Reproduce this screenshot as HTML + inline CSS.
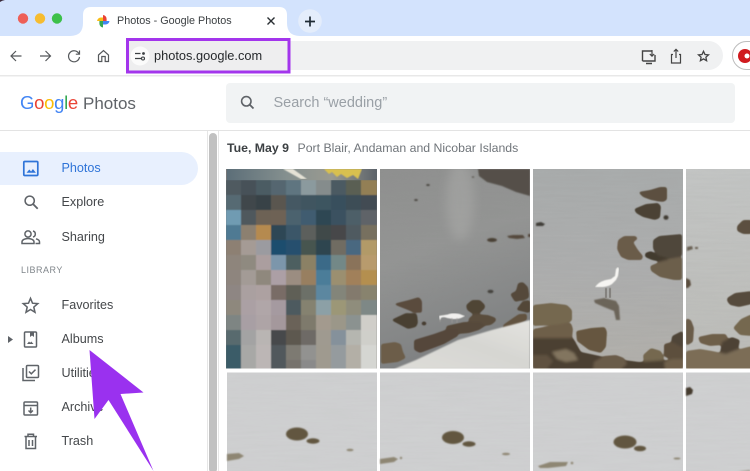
<!DOCTYPE html>
<html><head><meta charset="utf-8"><style>
html,body{margin:0;padding:0;background:#fff;width:750px;height:471px;overflow:hidden}
#r{position:relative;width:750px;height:471px;overflow:hidden;font-family:"Liberation Sans",sans-serif}
.t{position:absolute;white-space:nowrap;line-height:1}
.n{font-size:12.600px;color:#44474a;left:61.500px}
svg{position:absolute;left:0;top:0}
</style></head><body><div id="r">
<svg width="750" height="471" viewBox="0 0 750 471">
<defs>
<filter id="b" x="-5%" y="-5%" width="110%" height="110%"><feGaussianBlur stdDeviation="0.7"/></filter>
<filter id="bb" x="-30%" y="-30%" width="160%" height="160%"><feGaussianBlur stdDeviation="5"/></filter>
<filter id="rk" x="-5%" y="-5%" width="110%" height="110%"><feGaussianBlur stdDeviation="1.300"/><feColorMatrix values="1 0 0 0 0 0 1 0 0 0 0 0 1 0 0 0 0 0 7 -3"/><feGaussianBlur stdDeviation="0.500"/></filter>
<filter id="m" x="0" y="0" width="100%" height="100%"><feGaussianBlur stdDeviation="0.5"/></filter>
<filter id="w" x="0" y="0" width="100%" height="100%"><feTurbulence type="fractalNoise" baseFrequency="0.025 0.4" numOctaves="2" seed="4"/><feColorMatrix values="0 0 0 0 0.25 0 0 0 0 0.25 0 0 0 0 0.25 0 0 0 0.5 -0.12"/></filter>
<linearGradient id="g2" x1="0" y1="0" x2="0.25" y2="1"><stop offset="0" stop-color="#8f908f"/><stop offset=".45" stop-color="#949594"/><stop offset="1" stop-color="#7e8081"/></linearGradient>
<linearGradient id="g3" x1="0" y1="0" x2="0" y2="1"><stop offset="0" stop-color="#a9acac"/><stop offset=".5" stop-color="#adaeae"/><stop offset="1" stop-color="#b2b0ab"/></linearGradient>
<linearGradient id="g4" x1="0" y1="0" x2="0" y2="1"><stop offset="0" stop-color="#c3c5c4"/><stop offset="1" stop-color="#bcbcb8"/></linearGradient>
<linearGradient id="wd" x1="0" y1="1" x2="1" y2="0"><stop offset="0" stop-color="#dddcd8"/><stop offset=".55" stop-color="#d6d6d2"/><stop offset="1" stop-color="#e4e3df"/></linearGradient>
<linearGradient id="st" x1="0" y1="0" x2="1" y2="0"><stop offset="0" stop-color="#5c6e78"/><stop offset=".4" stop-color="#85908f"/><stop offset=".7" stop-color="#9a9a90"/><stop offset="1" stop-color="#5c636a"/></linearGradient>
<clipPath id="c1"><rect x="226" y="169" width="151" height="199.500"/></clipPath>
<clipPath id="c2"><rect x="380" y="169" width="150" height="199.500"/></clipPath>
<clipPath id="c3"><rect x="533" y="169" width="150" height="199.500"/></clipPath>
<clipPath id="c4"><rect x="686" y="169" width="64" height="199.500"/></clipPath>
</defs>

<!-- browser chrome -->
<rect width="750" height="36" fill="#d3e3fd"/>
<rect y="36" width="750" height="39" fill="#fff"/>
<rect y="75" width="750" height="1.500" fill="#e8e8e8"/>
<path d="M0 0h5q-3 .5-5 2z" fill="#3a2a3a"/>
<path d="M0 36h70q13 0 13-13V15q0-8 8-8h188q8 0 8 8v8q0 13 13 13h0v5H0z" fill="#fff"/>
<circle cx="23" cy="18.500" r="5.200" fill="#ee5f57"/><circle cx="40" cy="18.500" r="5.200" fill="#f6bc2f"/><circle cx="57" cy="18.500" r="5.200" fill="#3cc04a"/>
<!-- favicon -->
<path d="M97 21a4 4 0 0 1 4-3.500h2V21z" fill="#f9bc15"/>
<path d="M103 15a4 4 0 0 1 3.600 4V21H103z" fill="#ea4335"/>
<path d="M109.500 21a4 4 0 0 1-4 3.500H103V21z" fill="#4285f4"/>
<path d="M103 27.500a4 4 0 0 1-3.600-4V21H103z" fill="#34a853"/>
<path d="M267.500 17.500l7 7m0-7l-7 7" stroke="#2a2f33" stroke-width="1.400" fill="none"/>
<circle cx="310" cy="21" r="11.800" fill="#e4edfb"/>
<path d="M305 21.500h10M310 16.500v10" stroke="#1f2a33" stroke-width="1.700"/>

<!-- address bar -->
<rect x="127" y="41" width="596" height="29" rx="14.500" fill="#f0f1f2"/>
<rect x="127.500" y="39.500" width="161.500" height="32.500" fill="#eeeeef" stroke="#a335ec" stroke-width="3"/>
<circle cx="140" cy="56" r="9.500" fill="#fbfbfb"/>
<path d="M135 53.500h5.500M141.500 58.500h-6.500" stroke="#3c4043" stroke-width="1.300"/>
<circle cx="143.500" cy="53.500" r="1.400" fill="#3c4043"/>
<circle cx="143" cy="58.500" r="1.500" fill="none" stroke="#3c4043" stroke-width="1.100"/>
<g fill="none" stroke="#55585b" stroke-width="1.200">
<path d="M21.500 56H11.500M16 51l-5 5 5 5"/>
<path d="M40 56h10M45.500 51l5 5-5 5"/>
<path d="M78.800 53.500a5.500 5.500 0 1 0 .7 3.500M79.500 50.500v3.700h-3.700"/>
<path d="M98.500 55l5-4.500 5 4.500v6.500h-3.300V56.500h-3.400v5H98.500z"/>
<path d="M642.500 61V51h9M655 55v6h-12.500M646 63.500h6" stroke-width="1.400" stroke="#444"/>
<path d="M652 50v6M649.800 54l2.200 2.200 2.200-2.200" stroke-width="1.200" stroke="#444"/>
<path d="M673 54.500h-1.500V63h9v-8.500H679M676 58V49.500M673.800 51.500l2.200-2.200 2.200 2.200" stroke-width="1.200" stroke="#444"/>
<path d="M703.500 51.300l1.500 3.200 3.500.4-2.600 2.300.7 3.500-3.100-1.800-3.100 1.800.7-3.500-2.600-2.300 3.500-.4z" stroke-width="1.300" stroke="#444"/>
</g>
<rect x="732.500" y="41.500" width="40" height="28" rx="14" fill="#fff" stroke="#bdbdbd"/>
<circle cx="745" cy="56" r="7" fill="#d01a1e"/><circle cx="747" cy="56" r="2.500" fill="#fff"/>

<!-- app header -->
<rect x="226" y="83" width="509" height="40" rx="4" fill="#f1f3f4"/>
<path d="M253.500 108.500l-4.200-4.200" stroke="#5f6368" stroke-width="1.800"/>
<circle cx="246.300" cy="101.300" r="4.700" fill="none" stroke="#5f6368" stroke-width="1.600"/>
<rect y="130" width="750" height="1" fill="#e3e3e3"/>

<!-- sidebar -->
<path d="M0 152H181.500a16.500 16.500 0 0 1 0 33H0z" fill="#e8f0fe"/>
<rect x="207" y="131" width="1" height="340" fill="#e6e6e6"/>
<rect x="218" y="131" width="1" height="340" fill="#e6e6e6"/>
<rect x="209" y="133" width="8" height="340" rx="4" fill="#c1c1c1"/>
<!-- Photos icon -->
<rect x="23.800" y="161.500" width="14" height="14" rx="1" fill="none" stroke="#2f74d8" stroke-width="1.700"/>
<path d="M26.500 172.800l2.800-3.300 1.800 2 1.800-2.500 3 3.800z" fill="#2f74d8"/>
<g fill="none" stroke="#5f6368" stroke-width="1.500">
<circle cx="29.700" cy="200.700" r="4.600"/><path d="M33 204l4.700 4.700" stroke-width="1.800"/>
<circle cx="28" cy="234" r="3.100"/><path d="M22 243.500v-1.700c0-2.200 3.500-3.300 6-3.300s6 1.100 6 3.300v1.700z"/>
<path d="M33 231a3.100 3.100 0 0 1 0 6M36 238.800c2 .6 3.500 1.500 3.500 3v1.700h-4" />
<path d="M30.500 298.300l2 4.900 5.300.4-4 3.500 1.200 5.200-4.500-2.800-4.500 2.800 1.200-5.200-4-3.500 5.300-.4z"/>
<rect x="24.500" y="332" width="12" height="15" rx="1"/>
<path d="M23 368v12.500h12"/><rect x="26.500" y="365.500" width="12" height="12" rx="1"/>
<path d="M29 371.500l2.300 2.300 4.200-4.200"/>
<rect x="24" y="402" width="13.500" height="13" rx="1"/><path d="M24 405.500h13.500M30.700 407.500v5M28.500 410.500l2.200 2.200 2.200-2.200"/>
<path d="M24.500 436.500h12.500M28 436v-1.800h5.500V436M26 437v11.500h9.500V437M29 440v6M32.500 440v6"/>
</g>
<path d="M30 332h4v5l-2-1.500-2 1.500z" fill="#5f6368"/>
<path d="M27 344l2-2.500 1.200 1.300 1-1.300 2.300 2.500z" fill="#5f6368"/>
<path d="M8 336l5 3.500-5 3.500z" fill="#5f6368"/>

<!-- photo 1 mosaic -->
<g clip-path="url(#c1)">
<rect x="226" y="169" width="151" height="200" fill="#777"/>
<rect x="227" y="169" width="150" height="12" fill="url(#st)"/>
<g filter="url(#m)">
<path d="M283 169l18 10h6l-14-10z" fill="#e5e2d6"/>
<path d="M324 169l5 5 3-2 5 5 4-3 6 4 6-3 5 4 4-10z" fill="#d8c050"/>
</g>
<g filter="url(#m)">
<rect x="226" y="180" width="15" height="15" fill="#4f5a60"/><rect x="241" y="180" width="15" height="15" fill="#465158"/><rect x="256" y="180" width="15" height="15" fill="#4b5c64"/><rect x="271" y="180" width="15" height="15" fill="#54666f"/><rect x="286" y="180" width="15" height="15" fill="#5f7580"/><rect x="301" y="180" width="15" height="15" fill="#8b9a9e"/><rect x="316" y="180" width="15" height="15" fill="#858c8c"/><rect x="331" y="180" width="15" height="15" fill="#4c5a62"/><rect x="346" y="180" width="15" height="15" fill="#5a5f53"/><rect x="361" y="180" width="16" height="15" fill="#937f55"/>
<rect x="226" y="195" width="15" height="15" fill="#566a73"/><rect x="241" y="195" width="15" height="15" fill="#40474b"/><rect x="256" y="195" width="15" height="15" fill="#394247"/><rect x="271" y="195" width="15" height="15" fill="#5a564f"/><rect x="286" y="195" width="15" height="15" fill="#445864"/><rect x="301" y="195" width="15" height="15" fill="#3f5460"/><rect x="316" y="195" width="15" height="15" fill="#3e5561"/><rect x="331" y="195" width="15" height="15" fill="#38505d"/><rect x="346" y="195" width="15" height="15" fill="#3e4e57"/><rect x="361" y="195" width="16" height="15" fill="#434c52"/>
<rect x="226" y="210" width="15" height="15" fill="#6f9bb2"/><rect x="241" y="210" width="15" height="15" fill="#4f595d"/><rect x="256" y="210" width="15" height="15" fill="#6d6255"/><rect x="271" y="210" width="15" height="15" fill="#6e6254"/><rect x="286" y="210" width="15" height="15" fill="#4c626e"/><rect x="301" y="210" width="15" height="15" fill="#3f5c70"/><rect x="316" y="210" width="15" height="15" fill="#2f4753"/><rect x="331" y="210" width="15" height="15" fill="#3b5161"/><rect x="346" y="210" width="15" height="15" fill="#4d5e68"/><rect x="361" y="210" width="16" height="15" fill="#5e6468"/>
<rect x="226" y="225" width="15" height="15" fill="#4f7a93"/><rect x="241" y="225" width="15" height="15" fill="#8c806f"/><rect x="256" y="225" width="15" height="15" fill="#b58a50"/><rect x="271" y="225" width="15" height="15" fill="#2f4654"/><rect x="286" y="225" width="15" height="15" fill="#3a5668"/><rect x="301" y="225" width="15" height="15" fill="#5b5f5c"/><rect x="316" y="225" width="15" height="15" fill="#40494a"/><rect x="331" y="225" width="15" height="15" fill="#46474a"/><rect x="346" y="225" width="15" height="15" fill="#4f5a60"/><rect x="361" y="225" width="16" height="15" fill="#77705f"/>
<rect x="226" y="240" width="15" height="15" fill="#8d8073"/><rect x="241" y="240" width="15" height="15" fill="#a59b95"/><rect x="256" y="240" width="15" height="15" fill="#9b9ba0"/><rect x="271" y="240" width="15" height="15" fill="#1f4e6e"/><rect x="286" y="240" width="15" height="15" fill="#25506e"/><rect x="301" y="240" width="15" height="15" fill="#46554f"/><rect x="316" y="240" width="15" height="15" fill="#2d4550"/><rect x="331" y="240" width="15" height="15" fill="#6f6c62"/><rect x="346" y="240" width="15" height="15" fill="#4a6880"/><rect x="361" y="240" width="16" height="15" fill="#b29a67"/>
<rect x="226" y="255" width="15" height="15" fill="#8e857c"/><rect x="241" y="255" width="15" height="15" fill="#8f8a80"/><rect x="256" y="255" width="15" height="15" fill="#ab9e9f"/><rect x="271" y="255" width="15" height="15" fill="#7b96ab"/><rect x="286" y="255" width="15" height="15" fill="#4d5f60"/><rect x="301" y="255" width="15" height="15" fill="#8b8165"/><rect x="316" y="255" width="15" height="15" fill="#3a6b88"/><rect x="331" y="255" width="15" height="15" fill="#738887"/><rect x="346" y="255" width="15" height="15" fill="#8a735a"/><rect x="361" y="255" width="16" height="15" fill="#b89b6d"/>
<rect x="226" y="270" width="15" height="15" fill="#8e857e"/><rect x="241" y="270" width="15" height="15" fill="#a39b96"/><rect x="256" y="270" width="15" height="15" fill="#8f887d"/><rect x="271" y="270" width="15" height="15" fill="#ac9fa5"/><rect x="286" y="270" width="15" height="15" fill="#9b8d81"/><rect x="301" y="270" width="15" height="15" fill="#987f60"/><rect x="316" y="270" width="15" height="15" fill="#4b7d99"/><rect x="331" y="270" width="15" height="15" fill="#9b8f70"/><rect x="346" y="270" width="15" height="15" fill="#a1805a"/><rect x="361" y="270" width="16" height="15" fill="#b48f50"/>
<rect x="226" y="285" width="15" height="15" fill="#8e8683"/><rect x="241" y="285" width="15" height="15" fill="#aaa0a0"/><rect x="256" y="285" width="15" height="15" fill="#ada1a1"/><rect x="271" y="285" width="15" height="15" fill="#796c66"/><rect x="286" y="285" width="15" height="15" fill="#5e5e57"/><rect x="301" y="285" width="15" height="15" fill="#6c7068"/><rect x="316" y="285" width="15" height="15" fill="#5b87a0"/><rect x="331" y="285" width="15" height="15" fill="#83857a"/><rect x="346" y="285" width="15" height="15" fill="#837a6d"/><rect x="361" y="285" width="16" height="15" fill="#88836e"/>
<rect x="226" y="300" width="15" height="15" fill="#8e887d"/><rect x="241" y="300" width="15" height="15" fill="#aba0a4"/><rect x="256" y="300" width="15" height="15" fill="#b0a6a8"/><rect x="271" y="300" width="15" height="15" fill="#a59aa0"/><rect x="286" y="300" width="15" height="15" fill="#4e5a5f"/><rect x="301" y="300" width="15" height="15" fill="#85826f"/><rect x="316" y="300" width="15" height="15" fill="#8ca0a6"/><rect x="331" y="300" width="15" height="15" fill="#9c9777"/><rect x="346" y="300" width="15" height="15" fill="#8f8d7c"/><rect x="361" y="300" width="16" height="15" fill="#7e8886"/>
<rect x="226" y="315" width="15" height="15" fill="#7e8583"/><rect x="241" y="315" width="15" height="15" fill="#a89fa4"/><rect x="256" y="315" width="15" height="15" fill="#aea4a6"/><rect x="271" y="315" width="15" height="15" fill="#a4989c"/><rect x="286" y="315" width="15" height="15" fill="#6a6258"/><rect x="301" y="315" width="15" height="15" fill="#7e7a6c"/><rect x="316" y="315" width="15" height="15" fill="#a39a8e"/><rect x="331" y="315" width="15" height="15" fill="#9b9789"/><rect x="346" y="315" width="15" height="15" fill="#8b9290"/><rect x="361" y="315" width="16" height="15" fill="#d0cec9"/>
<rect x="226" y="330" width="15" height="15" fill="#586a6e"/><rect x="241" y="330" width="15" height="15" fill="#a3a3a3"/><rect x="256" y="330" width="15" height="15" fill="#b9b5b3"/><rect x="271" y="330" width="15" height="15" fill="#464a4c"/><rect x="286" y="330" width="15" height="15" fill="#5d5850"/><rect x="301" y="330" width="15" height="15" fill="#6e6a66"/><rect x="316" y="330" width="15" height="15" fill="#9f9a90"/><rect x="331" y="330" width="15" height="15" fill="#85919b"/><rect x="346" y="330" width="15" height="15" fill="#b5b6b0"/><rect x="361" y="330" width="16" height="15" fill="#cfcfca"/>
<rect x="226" y="345" width="15" height="24" fill="#3a5b68"/><rect x="241" y="345" width="15" height="24" fill="#a8a8a6"/><rect x="256" y="345" width="15" height="24" fill="#bcb6b5"/><rect x="271" y="345" width="15" height="24" fill="#51585c"/><rect x="286" y="345" width="15" height="15" fill="#7d7a72"/><rect x="301" y="345" width="15" height="15" fill="#929290"/><rect x="316" y="345" width="15" height="24" fill="#9f9a8f"/><rect x="331" y="345" width="15" height="24" fill="#959b9e"/><rect x="346" y="345" width="15" height="24" fill="#b3afa6"/><rect x="361" y="345" width="16" height="24" fill="#d5d6d2"/>
<rect x="286" y="360" width="15" height="9" fill="#77736d"/><rect x="301" y="360" width="15" height="9" fill="#8a8a8a"/>
</g>
</g>

<!-- photo 2 -->
<g clip-path="url(#c2)">
<rect x="380" y="169" width="150" height="200" fill="url(#g2)"/>
<rect x="380" y="169" width="150" height="200" filter="url(#w)" opacity=".3"/>
<ellipse cx="460" cy="200" rx="14" ry="40" fill="#b3b3b1" opacity=".4" filter="url(#bb)"/>
<path d="M478 169h52v27l-14-4-14-6-15-4-8-6z" fill="#55504a" filter="url(#b)"/>
<g filter="url(#b)">
<ellipse cx="428" cy="185" rx="1.800" ry="1" fill="#4a4640"/><ellipse cx="416" cy="200" rx="1.800" ry="1" fill="#4a4640"/><ellipse cx="473" cy="177" rx="1.300" ry=".8" fill="#5a5650"/>
<ellipse cx="492" cy="240" rx="5" ry="2" fill="#4a4034"/>
<path d="M507 236l6-1 10 0 2 3-8 1-8-1zM528 234l3 0v3l-3 0z" fill="#544a3c"/>
<ellipse cx="490.500" cy="291.500" rx="3" ry="1.700" fill="#44423e"/>
</g>
<g filter="url(#rk)">
<path d="M510 294l6-3 2-8 5-1 5 5 1 7 0 4-6 2-8 2z" fill="#54483a"/>
<path d="M393 304l16-4 10-3 3 4 0 12-9-1z" fill="#5a4c3c"/>
<path d="M391 320l15-7 11 1 1 9-2 4-8 2z" fill="#4a3f32"/>
<ellipse cx="424" cy="323.500" rx="2.800" ry="2.200" fill="#463c30"/>
<path d="M466 305l6-5 8 0 5 5 0 3-5 5-7 1-6-4z" fill="#4f4436"/>
<path d="M468 319l6-5 14 1 8 3 0 3-5 4-8 1-12-2z" fill="#5a4d3d"/>
<path d="M446 326l18-4 16 0 5 4-6 4-10 3-22 2z" fill="#574a3a"/>
<path d="M414 340l20-6 14-5 10 0 0 7-14 8-24 9-6-3z" fill="#54473a"/>
<path d="M381 344l14-2 6 2 2 8 3 6-8 4-17 2z" fill="#6c5d49"/>
<path d="M503 325l10-7 6-4 8 0 0 6-8 4-10 4-6 3z" fill="#62523f"/>
<path d="M516 310l6-8 8-2v13z" fill="#524637"/>
</g>
<path d="M394 369l22-9 42-20 34-10 38-10v49z" fill="url(#wd)" filter="url(#b)"/>
<g filter="url(#m)">
<path d="M439 316c4-1 8-1 10-2 3-1 10-1 13 1l3 1-4 2c-3 1-6 1-8 1l-6-1c-2-1-5-1-6 0l-1 3z" fill="#f1f0ee"/>
<path d="M440 322v-2.500M452 323v-5M457 323v-5" stroke="#9c9a96" stroke-width=".7"/>
</g>
</g>

<!-- photo 3 -->
<g clip-path="url(#c3)">
<rect x="533" y="169" width="150" height="200" fill="url(#g3)"/>
<rect x="533" y="169" width="150" height="200" filter="url(#w)" opacity=".28"/>
<g filter="url(#rk)">
<path d="M638 192l12-2 10-3 7 0 0 13-4 2-12-2-8-3z" fill="#5c5040"/>
<path d="M634 209l12-5 12-1 3 3-1 12-5 2-12-3-7-4z" fill="#4c4234"/>
<path d="M618 240l6-4 12 0 2 3-5 3 5 8 5 6-1 4-14 0-7-3-4-8z" fill="#6b5c49"/>
<path d="M653 240l6-4 23-2v22l-12 2-12-3-5-6z" fill="#50463a"/>
<path d="M645 253l6-2 8 5 10 3-7 3-10-2-7-3z" fill="#433a2e"/>
<path d="M650 266l12-5 20-4v23l-8 0-14-3-9-6z" fill="#6c5e4c"/>
<path d="M533 305l18-2 16 2 5 5 0 11-12 3-27 2z" fill="#75674f"/>
<path d="M533 329l18-3 20-3 2 6-1 9-39 2z" fill="#6e5f4a"/>
<path d="M576 331l15-3 14-1 2 5-1 15-5 6-12-3-12-9z" fill="#66573f"/>
<path d="M672 336l10-5 1 0v23l-8-2-4-8z" fill="#4f4437"/>
<path d="M664 344l8-2 11 6v12l-8 2-11-6z" fill="#5d4f3e"/>
<path d="M643 355l8-7 10 3 3 8-8 6-12-1z" fill="#75674f"/>
<path d="M533 338l40 0 8 14 28 6 30 4 44-3 0 10H533z" fill="#4b4033"/>
<path d="M552 352l14-3 8 4 4 7-12 2-9-3z" fill="#82745e"/>
<path d="M533 355h14l6 6-6 8h-14z" fill="#5f5140"/>
<path d="M594 362l10-6 12-1 8 3 3 6-6 5-28 0z" fill="#6a5b48"/>
<path d="M664 362l8-3 11 0v10h-18z" fill="#6f604c"/>
</g>
<g filter="url(#b)">
<ellipse cx="666" cy="217.500" rx="2.500" ry="2.300" fill="#403a30"/>
<path d="M536 223l5-1 4 2-2 2-7 0z" fill="#3f3c38"/>
<path d="M594 300l10-2 12 3 3 5 1 14-4 0-2-9-10-4-9-4z" fill="#5f574b" opacity=".85"/>
</g>
<g filter="url(#m)">
<path d="M596 286c2-3 6-5 10-6l5-1 4-3 1-7 2-2 1 2-1 7-2 4-4 4c-3 2-7 3-11 3l-6 0z" fill="#f6f5f2"/>
<path d="M606 288v10M610 288v10" stroke="#57514a" stroke-width="1"/>
</g>
</g>

<!-- photo 4 -->
<g clip-path="url(#c4)">
<rect x="686" y="169" width="64" height="200" fill="url(#g4)"/>
<rect x="686" y="169" width="64" height="200" filter="url(#w)" opacity=".22"/>
<g filter="url(#b)">
<path d="M687 247l5-1 1 3-6 2zM695 247h3v2h-3z" fill="#6b6255"/>
<path d="M686 278l4 2 1 5-3 3h-2z" fill="#5a4d3e"/>
</g>
<g filter="url(#rk)">
<path d="M737 226l6-6h9v14h-9l-6-3z" fill="#5c5040"/>
<path d="M727 298l8-5 17-2v13l-13 3-9-2-3-4z" fill="#574b3c"/>
<path d="M733 328l8-9 11-5v22l-12-1z" fill="#75674f"/>
<path d="M686 318l5 2 3 8-1 14-7 4z" fill="#6a5c48"/>
<path d="M698 337l14-3 14 0 2 5-6 6-12 1-10-3z" fill="#6e5f4a"/>
<path d="M722 342l10-5 8 3-2 10-10 7-8-4z" fill="#4e4236"/>
<path d="M686 351l14-2 12 2 14 3 10-4 16-4v24h-66z" fill="#7b6d57"/>
</g>
</g>

<!-- row 2 -->
<g>
<rect x="227" y="372.500" width="150" height="99" fill="#cfd0d1"/>
<rect x="380" y="372.500" width="150" height="99" fill="#cfd0d1"/>
<rect x="533" y="372.500" width="150" height="99" fill="#cfd0d1"/>
<rect x="686" y="372.500" width="64" height="99" fill="#cfd0d1"/>
<rect x="227" y="372.500" width="523" height="99" filter="url(#w)" opacity=".13"/>
<rect x="377" y="372" width="3" height="99" fill="#fff"/><rect x="530" y="372" width="3" height="99" fill="#fff"/><rect x="683" y="372" width="3" height="99" fill="#fff"/>
<g filter="url(#b)">
<g fill="#625640">
<ellipse cx="297" cy="434" rx="11" ry="6.500"/><ellipse cx="313" cy="441" rx="6.500" ry="2.700"/>
<ellipse cx="453" cy="437.500" rx="11" ry="6.500"/><ellipse cx="469" cy="444" rx="6.500" ry="2.700"/>
<ellipse cx="625" cy="442" rx="11.500" ry="6.500"/><ellipse cx="640" cy="448.500" rx="6" ry="2.800"/>
</g>
<g fill="#8e8673">
<path d="M227 454l12-1 5 3-5 3-12 2z"/><ellipse cx="350" cy="450" rx="3.500" ry="1.200"/>
<path d="M380 459l14-2 4 2-4 3-14 2z"/><circle cx="401" cy="458" r="1.200"/><ellipse cx="506" cy="454" rx="4" ry="1.200"/>
<path d="M538 466l12-4 18 0-2 4-18 2-8 0z"/><circle cx="572" cy="463" r="1.300"/><ellipse cx="677" cy="458.500" rx="3.500" ry="1"/>
</g>
<path d="M686 388l4-1 3 3-1 4-6 2z" fill="#453a2e"/>
<path d="M738 471l12-1v1z" fill="#8e8673"/>
</g>
</g>
</svg>

<span class="t" style="left:117px;top:15.500px;font-size:10.800px;color:#3c4043">Photos - Google Photos</span>
<span class="t" style="left:154px;top:49.500px;font-size:12.800px;color:#26292c">photos.google.com</span>
<span class="t" style="left:20px;top:94px;font-size:18.500px;letter-spacing:-.3px"><span style="color:#4285f4">G</span><span style="color:#ea4335">o</span><span style="color:#fbbc05">o</span><span style="color:#4285f4">g</span><span style="color:#34a853">l</span><span style="color:#ea4335">e</span></span>
<span class="t" style="left:83px;top:95px;font-size:17px;color:#5f6368">Photos</span>
<span class="t" style="left:273.500px;top:95.500px;font-size:14.500px;color:#9aa0a6">Search “wedding”</span>
<span class="t" style="left:227px;top:142px;font-size:12.300px;color:#3c4043;font-weight:bold">Tue, May 9</span>
<span class="t" style="left:297.500px;top:142px;font-size:12.300px;color:#70757a">Port Blair, Andaman and Nicobar Islands</span>
<span class="t n" style="top:162px;color:#2f74d8">Photos</span>
<span class="t n" style="top:196px">Explore</span>
<span class="t n" style="top:230.500px">Sharing</span>
<span class="t" style="left:21px;top:266px;font-size:9px;letter-spacing:.5px;color:#80868b">LIBRARY</span>
<span class="t n" style="top:298.500px">Favorites</span>
<span class="t n" style="top:332.500px">Albums</span>
<span class="t n" style="top:366.500px">Utilities</span>
<span class="t n" style="top:401px">Archive</span>
<span class="t n" style="top:435px">Trash</span>
<svg width="750" height="471" viewBox="0 0 750 471"><path d="M89.500 350L143.500 392.500L120.500 394L153.500 471L108.500 400L94.500 419z" fill="#9a31ef"/></svg>
</div></body></html>
